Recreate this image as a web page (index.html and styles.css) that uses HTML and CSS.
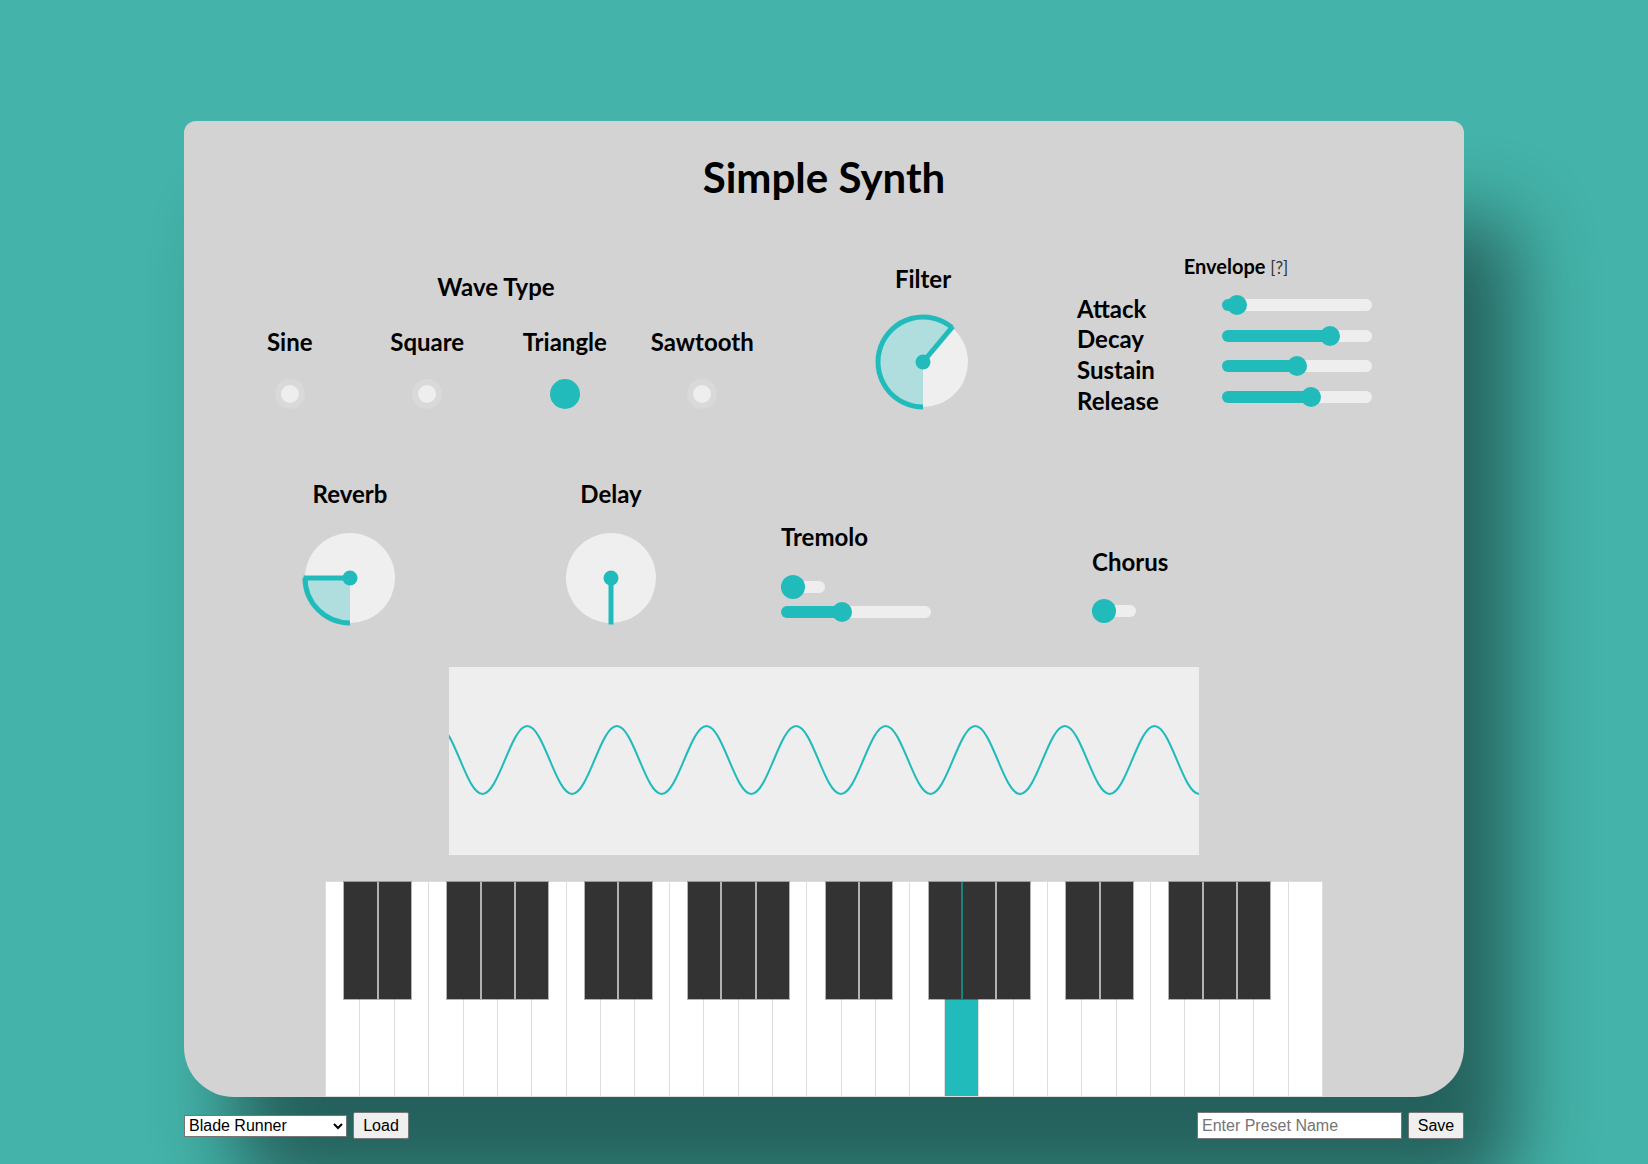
FILE: index.html
```html
<!DOCTYPE html>
<html lang="en">
<head>
<meta charset="utf-8">
<title>Simple Synth</title>
<link rel="stylesheet" href="styles.css">
</head>
<body>
<div class="app">
  <div class="synth">
    <h1 class="title">Simple Synth</h1>

    <div class="row row-top">
      <div class="wave-type">
        <h3 class="heading">Wave Type</h3>
        <div class="wave-options">
          <label class="wave-option"><span class="option-name">Sine</span><input type="radio" name="wave" class="radio"></label>
          <label class="wave-option"><span class="option-name">Square</span><input type="radio" name="wave" class="radio"></label>
          <label class="wave-option"><span class="option-name">Triangle</span><input type="radio" name="wave" class="radio" checked></label>
          <label class="wave-option"><span class="option-name">Sawtooth</span><input type="radio" name="wave" class="radio"></label>
        </div>
      </div>

      <div class="knob-block filter">
        <h3 class="heading">Filter</h3>
        <svg class="knob" viewBox="0 0 100 100">
          <circle cx="50" cy="50" r="45" class="knob-face"/>
          <path d="M50 50 L50 95 A45 45 0 1 1 78.93 15.53 Z" class="knob-sector"/>
          <path d="M50 95 A45 45 0 1 1 78.93 15.53" class="knob-arc"/>
          <line x1="50" y1="50" x2="79.89" y2="14.38" class="knob-pointer"/>
          <circle cx="50" cy="50" r="7.5" class="knob-dot"/>
        </svg>
      </div>

      <div class="envelope">
        <div class="envelope-title">Envelope <span class="help">[?]</span></div>
        <div class="env-grid">
          <span class="env-label">Attack</span><input type="range" class="slider" min="0" max="100" value="4.4" style="--fill: 10.5%">
          <span class="env-label">Decay</span><input type="range" class="slider" min="0" max="100" value="75.4" style="--fill: 72%">
          <span class="env-label">Sustain</span><input type="range" class="slider" min="0" max="100" value="50" style="--fill: 50%">
          <span class="env-label">Release</span><input type="range" class="slider" min="0" max="100" value="60.5" style="--fill: 59%">
        </div>
      </div>
    </div>

    <div class="row row-bottom">
      <div class="knob-block effect-knob reverb">
        <h3 class="heading">Reverb</h3>
        <svg class="knob knob-low" viewBox="0 0 100 100">
          <circle cx="50" cy="50" r="45" class="knob-face"/>
          <path d="M50 50 L50 95 A45 45 0 0 1 5 50 Z" class="knob-sector"/>
          <path d="M50 95 A45 45 0 0 1 5 50" class="knob-arc"/>
          <line x1="50" y1="50" x2="3.5" y2="50" class="knob-pointer"/>
          <circle cx="50" cy="50" r="7.5" class="knob-dot"/>
        </svg>
      </div>

      <div class="knob-block effect-knob delay">
        <h3 class="heading">Delay</h3>
        <svg class="knob knob-low" viewBox="0 0 100 100">
          <circle cx="50" cy="50" r="45" class="knob-face"/>
          <line x1="50" y1="50" x2="50" y2="96.5" class="knob-pointer"/>
          <circle cx="50" cy="50" r="7.5" class="knob-dot"/>
        </svg>
      </div>

      <div class="tremolo">
        <h3 class="heading">Tremolo</h3>
        <div class="slot slot-toggle"><input type="range" class="slider toggle" min="0" max="1" value="0" style="--fill: 27%"></div>
        <div class="slot slot-rate"><input type="range" class="slider" min="0" max="100" value="39.2" style="--fill: 40.7%"></div>
      </div>

      <div class="chorus">
        <h3 class="heading">Chorus</h3>
        <div class="slot slot-chorus"><input type="range" class="slider toggle" min="0" max="1" value="0" style="--fill: 27%"></div>
      </div>
    </div>

    <svg class="scope" viewBox="0 0 750 188">
      <path class="wave" d="M-11.3 59 C5.02 59 17.18 127 33.5 127 S61.98 59 78.3 59 S106.78 127 123.1 127 S151.58 59 167.9 59 S196.38 127 212.7 127 S241.18 59 257.5 59 S285.98 127 302.3 127 S330.78 59 347.1 59 S375.58 127 391.9 127 S420.38 59 436.7 59 S465.18 127 481.5 127 S509.98 59 526.3 59 S554.78 127 571.1 127 S599.58 59 615.9 59 S644.38 127 660.7 127 S689.18 59 705.5 59 S733.98 127 750.3 127 S778.78 59 795.1 59"/>
    </svg>

    <div class="keyboard">
      <div class="white-key"></div><div class="white-key"></div><div class="white-key"></div><div class="white-key"></div><div class="white-key"></div><div class="white-key"></div><div class="white-key"></div>
      <div class="white-key"></div><div class="white-key"></div><div class="white-key"></div><div class="white-key"></div><div class="white-key"></div><div class="white-key"></div><div class="white-key"></div>
      <div class="white-key"></div><div class="white-key"></div><div class="white-key"></div><div class="white-key"></div><div class="white-key active"></div><div class="white-key"></div><div class="white-key"></div>
      <div class="white-key"></div><div class="white-key"></div><div class="white-key"></div><div class="white-key"></div><div class="white-key"></div><div class="white-key"></div><div class="white-key"></div>
      <div class="white-key"></div>

      <div class="black-key" style="left: 1.7241%"></div>
      <div class="black-key" style="left: 5.1724%"></div>
      <div class="black-key" style="left: 12.0690%"></div>
      <div class="black-key" style="left: 15.5172%"></div>
      <div class="black-key" style="left: 18.9655%"></div>
      <div class="black-key" style="left: 25.8621%"></div>
      <div class="black-key" style="left: 29.3103%"></div>
      <div class="black-key" style="left: 36.2069%"></div>
      <div class="black-key" style="left: 39.6552%"></div>
      <div class="black-key" style="left: 43.1034%"></div>
      <div class="black-key" style="left: 50%"></div>
      <div class="black-key" style="left: 53.4483%"></div>
      <div class="black-key" style="left: 60.3448%"></div>
      <div class="black-key" style="left: 63.7931%"></div>
      <div class="black-key" style="left: 67.2414%"></div>
      <div class="black-key" style="left: 74.1379%"></div>
      <div class="black-key" style="left: 77.5862%"></div>
      <div class="black-key" style="left: 84.4828%"></div>
      <div class="black-key" style="left: 87.9310%"></div>
      <div class="black-key" style="left: 91.3793%"></div>
    </div>
  </div>

  <div class="presets">
    <div class="preset-group">
      <select class="preset-select">
        <option selected>Blade Runner</option>
        <option>Init</option>
        <option>Soft Pad</option>
      </select>
      <button class="btn">Load</button>
    </div>
    <div class="preset-group">
      <input type="text" class="preset-name" placeholder="Enter Preset Name">
      <button class="btn">Save</button>
    </div>
  </div>
</div>
</body>
</html>
```

FILE: styles.css
```css
* {
  box-sizing: border-box;
}

body {
  margin: 0;
  background: #44b3a9;
  font-family: Lato, "Open Sans", "Liberation Sans", sans-serif;
  color: #000;
}

.app {
  width: 1280px;
  margin: 0 auto;
  padding: 121px 0 25px;
}

.synth {
  height: 976px;
  padding-top: 30.5px;
  background: #d3d3d3;
  border-radius: 12px 12px 50px 50px;
  box-shadow: 50px 100px 80px rgba(0, 0, 0, 0.46);
}

.title {
  margin: 0;
  font-size: 42px;
  line-height: 50px;
  font-weight: 700;
  text-align: center;
}

.row {
  display: flex;
  align-items: flex-start;
}

.row-top {
  height: 219px;
  margin-top: 49.5px;
  padding-left: 37px;
}

.row-bottom {
  height: 197px;
  padding-left: 86px;
}

.heading {
  margin: 0;
  font-size: 24px;
  line-height: 26px;
  font-weight: 700;
}

/* wave type */
.wave-type {
  width: 550px;
  padding-top: 23px;
  text-align: center;
}

.wave-options {
  display: flex;
  margin-top: 28px;
}

.wave-option {
  width: 137.5px;
  display: flex;
  flex-direction: column;
  align-items: center;
}

.option-name {
  font-size: 24px;
  line-height: 28px;
  font-weight: 700;
}

.radio {
  -webkit-appearance: none;
  appearance: none;
  margin: 23px 0 0;
  width: 30px;
  height: 30px;
  border-radius: 50%;
  background: #eeeeee;
  border: 6px solid #d9d9d9;
}

.radio:checked {
  background: #22bbbb;
  border-color: #22bbbb;
}

/* knobs */
.knob-block {
  text-align: center;
}

.filter {
  width: 120px;
  margin-left: 92px;
  padding-top: 15px;
}

.knob {
  display: block;
  width: 100px;
  height: 100px;
  margin: 20px auto 0;
  overflow: visible;
}

.knob-low {
  margin-top: 21px;
}

.knob-face {
  fill: #efefef;
}

.knob-sector {
  fill: #b0dede;
}

.knob-arc {
  fill: none;
  stroke: #22bbbb;
  stroke-width: 5;
}

.knob-pointer {
  stroke: #22bbbb;
  stroke-width: 5;
}

.knob-dot {
  fill: #22bbbb;
}

/* envelope */
.envelope {
  width: 318px;
  margin-left: 94px;
  padding-top: 3px;
}

.envelope-title {
  text-align: center;
  font-size: 20px;
  line-height: 24px;
  font-weight: 700;
}

.help {
  font-weight: 400;
  font-size: 17px;
  color: #333;
}

.env-grid {
  display: grid;
  grid-template-columns: 145px 150px;
  grid-auto-rows: 30.8px;
  margin-top: 14.5px;
}

.env-label {
  font-size: 24px;
  line-height: 27px;
  font-weight: 700;
}

/* sliders */
.slider {
  -webkit-appearance: none;
  appearance: none;
  display: block;
  margin: 0;
  padding: 0;
  width: 150px;
  height: 12px;
  border-radius: 6px;
  background: linear-gradient(to right, #22bbbb var(--fill), #eeeeee var(--fill));
  outline: none;
}

.slider::-webkit-slider-thumb {
  -webkit-appearance: none;
  appearance: none;
  width: 20px;
  height: 20px;
  border-radius: 50%;
  background: #22bbbb;
  border: none;
}

.slider.toggle {
  width: 44px;
}

.slider.toggle::-webkit-slider-thumb {
  width: 24px;
  height: 24px;
}

.env-grid .slider {
  align-self: center;
  margin-bottom: 10px;
}

/* effects */
.effect-knob {
  width: 160px;
  padding-top: 11px;
}

.delay {
  margin-left: 101px;
}

.tremolo {
  width: 150px;
  margin-left: 90px;
  padding-top: 54px;
}

.slot {
  display: flex;
  align-items: center;
}

.slot-toggle {
  height: 24px;
  margin-top: 25px;
}

.slot-rate {
  height: 20px;
  margin-top: 3px;
}

.chorus {
  margin-left: 161px;
  padding-top: 79px;
}

.slot-chorus {
  height: 24px;
  margin-top: 24px;
}

/* oscilloscope */
.scope {
  display: block;
  width: 750px;
  height: 188px;
  margin: 0 auto;
  background: #eeeeee;
}

.wave {
  fill: none;
  stroke: #22bbbb;
  stroke-width: 2;
}

/* keyboard */
.keyboard {
  position: relative;
  display: flex;
  width: 998px;
  height: 216px;
  margin: 26px auto 0;
  border-left: 1px solid #dddddd;
}

.white-key {
  flex: 0 0 calc(100% / 29);
  height: 100%;
  background: #ffffff;
  border: 1px solid #dddddd;
  border-left: none;
}

.white-key.active {
  background: #22bbbb;
}

.black-key {
  position: absolute;
  top: 0;
  width: calc(100% / 29);
  height: 119px;
  background: #333333;
  background-clip: padding-box;
  border: 1px solid rgba(0, 0, 0, 0.3);
}

/* presets */
.presets {
  display: flex;
  justify-content: space-between;
  align-items: center;
  margin-top: 15px;
}

.preset-group {
  display: flex;
  align-items: center;
  gap: 6px;
}

.preset-select {
  width: 163px;
  height: 22px;
  font: 16px "Liberation Sans", Arial, sans-serif;
  color: #000;
  background: #fff;
  border: 1px solid #767676;
  border-radius: 0;
}

.btn {
  width: 56px;
  height: 27px;
  padding: 0;
  font: 16px "Liberation Sans", Arial, sans-serif;
  color: #000;
  background: #efefef;
  border: 1px solid #767676;
  border-radius: 2px;
}

.preset-name {
  width: 205px;
  height: 27px;
  padding: 0 4px;
  font: 16px "Liberation Sans", Arial, sans-serif;
  color: #000;
  background: #fff;
  border: 1px solid #767676;
}

.preset-name::placeholder {
  color: #757575;
}
```
